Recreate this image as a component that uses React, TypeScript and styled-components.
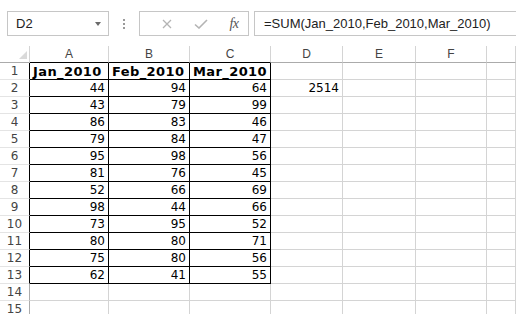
import styled, { createGlobalStyle } from "styled-components";

const GlobalStyle = createGlobalStyle`
  body {
    margin: 0;
    background: #ffffff;
    overflow: hidden;
  }
`;

const Page = styled.div`
  width: 516px;
  height: 314px;
  overflow: hidden;
  background: #ffffff;
`;

// formula bar strip above the sheet
const Toolbar = styled.div`
  height: 46px;
  box-sizing: border-box;
  padding: 11px 0 0 7px;
  display: flex;
  align-items: flex-start;
`;

const NameBox = styled.div`
  width: 102px;
  height: 25px;
  box-sizing: border-box;
  border: 1px solid #c6c6c6;
  display: flex;
  align-items: center;
  justify-content: space-between;
  padding: 0 7px 0 8px;
  font-family: "Liberation Sans", Arial, sans-serif;
  font-size: 13px;
  color: #222;
`;

const Caret = styled.span`
  width: 0;
  height: 0;
  border-left: 3px solid transparent;
  border-right: 3px solid transparent;
  border-top: 4px solid #6a6a6a;
`;

const Grip = styled.div`
  width: 30px;
  height: 25px;
  display: flex;
  flex-direction: column;
  align-items: center;
  justify-content: center;
  gap: 2px;
`;

const GripDot = styled.span`
  width: 2px;
  height: 2px;
  background: #9a9a9a;
`;

const ButtonGroup = styled.div`
  width: 110px;
  height: 25px;
  box-sizing: border-box;
  border: 1px solid #c6c6c6;
  display: flex;
  align-items: center;
  padding-left: 13px;
`;

const IconButton = styled.span<{ $w: number }>`
  width: ${(p) => p.$w}px;
  display: flex;
  align-items: center;
  justify-content: center;
`;

const Fx = styled.span`
  font-family: "Liberation Serif", "Times New Roman", serif;
  font-style: italic;
  font-size: 14px;
  color: #555;
  letter-spacing: -0.5px;
`;

const FormulaBox = styled.div`
  flex: 1;
  height: 25px;
  box-sizing: border-box;
  margin-left: 5px;
  border: 1px solid #c6c6c6;
  border-right: none;
  display: flex;
  align-items: center;
  padding-left: 9px;
  font-family: "Liberation Sans", Arial, sans-serif;
  font-size: 13px;
  color: #222;
  white-space: nowrap;
`;

// the worksheet grid
const Sheet = styled.div`
  display: grid;
  grid-template-columns: 30px 79px 81px 81px 72px 73px 71px 1fr;
  grid-auto-rows: 17px;
`;

const Corner = styled.div`
  box-sizing: border-box;
  border-right: 1px solid #d4d4d4;
  border-bottom: 1px solid #ababab;
  display: flex;
  align-items: flex-end;
  justify-content: flex-end;
  padding: 0 2px 3px 0;
`;

const ColHead = styled.div<{ $dark?: boolean }>`
  box-sizing: border-box;
  border-right: 1px solid #d4d4d4;
  border-bottom: 1px solid ${(p) => (p.$dark ? "#000" : "#ababab")};
  text-align: center;
  line-height: 17px;
  font-family: "Liberation Sans", Arial, sans-serif;
  font-size: 12px;
  color: #444;
`;

const RowHead = styled.div<{ $dark?: boolean }>`
  box-sizing: border-box;
  border-right: 1px solid ${(p) => (p.$dark ? "#000" : "#ababab")};
  border-bottom: 1px solid #e4e4e4;
  text-align: center;
  line-height: 17px;
  font-family: "DejaVu Sans", Verdana, sans-serif;
  font-size: 12px;
  color: #444;
`;

const Cell = styled.div<{ $boxed?: boolean; $bold?: boolean }>`
  box-sizing: border-box;
  border-right: 1px solid ${(p) => (p.$boxed ? "#000" : "#d4d4d4")};
  border-bottom: 1px solid ${(p) => (p.$boxed ? "#000" : "#d4d4d4")};
  padding: 0 3px;
  text-align: ${(p) => (p.$bold ? "left" : "right")};
  line-height: 17px;
  font-family: "DejaVu Sans", Verdana, sans-serif;
  font-size: ${(p) => (p.$bold ? 13 : 12)}px;
  font-weight: ${(p) => (p.$bold ? 700 : 400)};
  letter-spacing: ${(p) => (p.$bold ? "0.4px" : "0")};
  color: #000;
  white-space: nowrap;
  overflow: hidden;
`;

const columns = ["A", "B", "C", "D", "E", "F", ""];
const titles = ["Jan_2010", "Feb_2010", "Mar_2010"];
const data = [
  [44, 94, 64],
  [43, 79, 99],
  [86, 83, 46],
  [79, 84, 47],
  [95, 98, 56],
  [81, 76, 45],
  [52, 66, 69],
  [98, 44, 66],
  [73, 95, 52],
  [80, 80, 71],
  [75, 80, 56],
  [62, 41, 55],
];

const cellValue = (row: number, col: number) => {
  if (row === 1 && col < 3) return titles[col];
  if (row >= 2 && row <= 13 && col < 3) return data[row - 2][col];
  if (row === 2 && col === 3) return 2514;
  return "";
};

const App = () => {
  const rows = Array.from({ length: 15 }, (_, i) => i + 1);
  return (
    <Page>
      <GlobalStyle />
      <Toolbar>
        <NameBox>
          D2
          <Caret />
        </NameBox>
        <Grip>
          <GripDot />
          <GripDot />
          <GripDot />
        </Grip>
        <ButtonGroup>
          <IconButton $w={28}>
            <svg width="10" height="10" viewBox="0 0 10 10">
              <path d="M1 1L9 9M9 1L1 9" stroke="#b4b4b4" strokeWidth="1.3" fill="none" />
            </svg>
          </IconButton>
          <IconButton $w={40}>
            <svg width="14" height="10" viewBox="0 0 14 10">
              <path d="M1 5.5L5 9L13 1" stroke="#b4b4b4" strokeWidth="1.6" fill="none" />
            </svg>
          </IconButton>
          <IconButton $w={26}>
            <Fx>fx</Fx>
          </IconButton>
        </ButtonGroup>
        <FormulaBox>=SUM(Jan_2010,Feb_2010,Mar_2010)</FormulaBox>
      </Toolbar>
      <Sheet>
        <Corner>
          <svg width="8" height="8" viewBox="0 0 8 8">
            <path d="M8 0L8 8L0 8Z" fill="#dadada" />
          </svg>
        </Corner>
        {columns.map((c, i) => (
          <ColHead key={c + i} $dark={i < 3}>
            {c}
          </ColHead>
        ))}
        {rows.map((r) => (
          <>
            <RowHead key={"h" + r} $dark={r <= 13}>
              {r}
            </RowHead>
            {columns.map((_, c) => (
              <Cell key={r + "-" + c} $boxed={r <= 13 && c < 3} $bold={r === 1 && c < 3}>
                {cellValue(r, c)}
              </Cell>
            ))}
          </>
        ))}
      </Sheet>
    </Page>
  );
};

export default App;
